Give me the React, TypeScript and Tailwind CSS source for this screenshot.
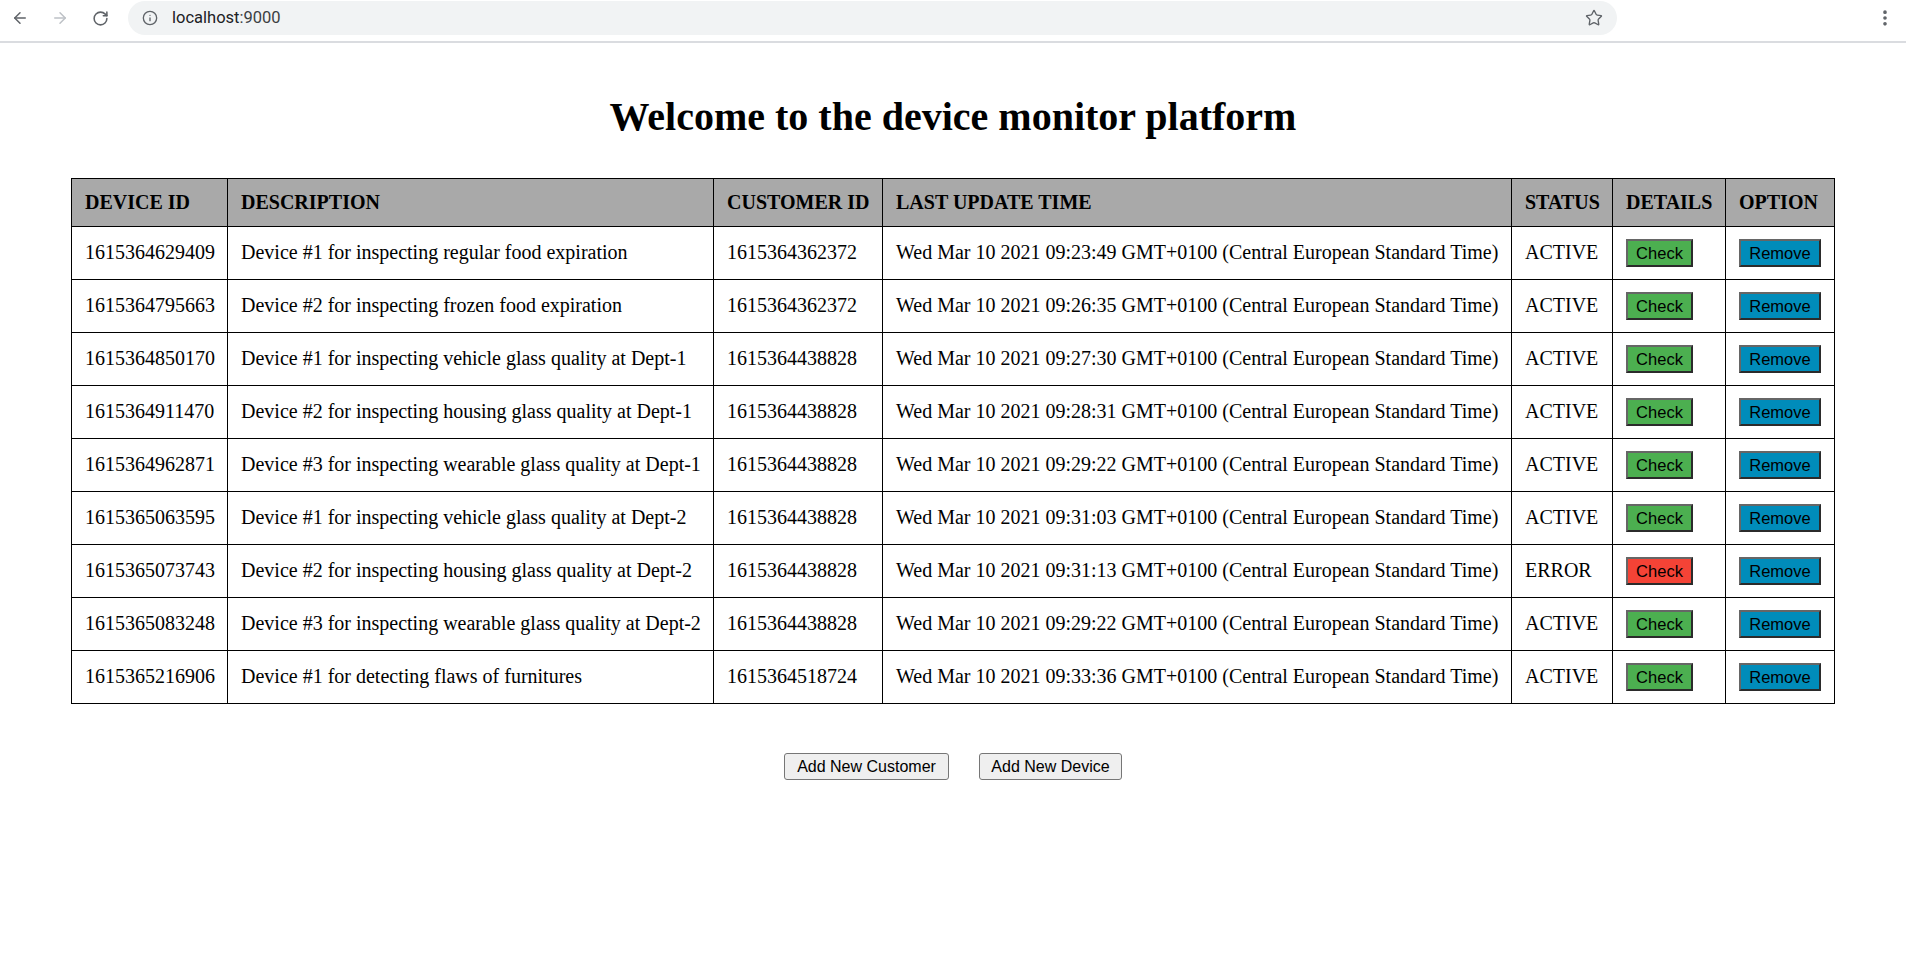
import { ArrowLeft, ArrowRight, RotateCw, Info, Star, EllipsisVertical } from "lucide-react";

type Device = {
  id: string;
  description: string;
  customerId: string;
  updated: string;
  status: "ACTIVE" | "ERROR";
};

const devices: Device[] = [
  { id: "1615364629409", description: "Device #1 for inspecting regular food expiration", customerId: "1615364362372", updated: "09:23:49", status: "ACTIVE" },
  { id: "1615364795663", description: "Device #2 for inspecting frozen food expiration", customerId: "1615364362372", updated: "09:26:35", status: "ACTIVE" },
  { id: "1615364850170", description: "Device #1 for inspecting vehicle glass quality at Dept-1", customerId: "1615364438828", updated: "09:27:30", status: "ACTIVE" },
  { id: "1615364911470", description: "Device #2 for inspecting housing glass quality at Dept-1", customerId: "1615364438828", updated: "09:28:31", status: "ACTIVE" },
  { id: "1615364962871", description: "Device #3 for inspecting wearable glass quality at Dept-1", customerId: "1615364438828", updated: "09:29:22", status: "ACTIVE" },
  { id: "1615365063595", description: "Device #1 for inspecting vehicle glass quality at Dept-2", customerId: "1615364438828", updated: "09:31:03", status: "ACTIVE" },
  { id: "1615365073743", description: "Device #2 for inspecting housing glass quality at Dept-2", customerId: "1615364438828", updated: "09:31:13", status: "ERROR" },
  { id: "1615365083248", description: "Device #3 for inspecting wearable glass quality at Dept-2", customerId: "1615364438828", updated: "09:29:22", status: "ACTIVE" },
  { id: "1615365216906", description: "Device #1 for detecting flaws of furnitures", customerId: "1615364518724", updated: "09:33:36", status: "ACTIVE" },
];

const headers = ["DEVICE ID", "DESCRIPTION", "CUSTOMER ID", "LAST UPDATE TIME", "STATUS", "DETAILS", "OPTION"];
const widths = [156, 486, 169, 629, 101, 113, 109];

const btnBorder =
  "border-2 border-t-[#666] border-l-[#666] border-r-[#2b2b2b] border-b-[#2b2b2b] text-[16.5px] leading-none text-black font-['Liberation_Sans',Arial,sans-serif]";

const cell = "border border-black pl-[13px] pr-[10px] pb-[2px] whitespace-nowrap";

function BrowserBar() {
  return (
    <div className="h-[43px] border-b-2 border-[#dadce0] bg-white">
      <div className="flex items-center h-[36px]">
        <div className="w-[40px] flex justify-center">
          <ArrowLeft size={18} strokeWidth={2} className="text-[#5f6368]" />
        </div>
        <div className="w-[40px] flex justify-center">
          <ArrowRight size={18} strokeWidth={2} className="text-[#bdc1c6]" />
        </div>
        <div className="w-[40px] flex justify-center">
          <RotateCw size={17} strokeWidth={2.2} className="text-[#5f6368]" />
        </div>
        <div className="ml-[8px] w-[1489px] h-[34px] rounded-full bg-[#f1f3f4] flex items-center pl-[14px] pr-[14px]">
          <Info size={16} strokeWidth={2} className="text-[#5f6368]" />
          <span className="ml-[14px] text-[16.5px] font-['Roboto',sans-serif] text-[#202124]">
            localhost<span className="text-[#3c4043]">:9000</span>
          </span>
          <div className="flex-1" />
          <Star size={18} strokeWidth={1.8} className="text-[#5f6368]" />
        </div>
        <div className="flex-1" />
        <div className="w-[40px] flex justify-center mr-[1px]">
          <EllipsisVertical size={20} strokeWidth={2.4} className="text-[#5f6368]" />
        </div>
      </div>
    </div>
  );
}

export default function App() {
  return (
    <div className="min-h-screen bg-white text-black font-['Liberation_Serif','Times_New_Roman',serif]">
      <BrowserBar />
      <h1 className="mt-[51px] text-center text-[40px] leading-[46px] font-bold">
        Welcome to the device monitor platform
      </h1>
      <table className="mx-auto mt-[38px] w-[1763px] table-fixed border-collapse text-[20px]">
        <colgroup>
          {widths.map((w, i) => (
            <col key={i} style={{ width: w }} />
          ))}
        </colgroup>
        <thead>
          <tr className="h-[48px] bg-[#a9a9a9]">
            {headers.map((h) => (
              <th key={h} className={`${cell} text-left font-bold`}>
                {h}
              </th>
            ))}
          </tr>
        </thead>
        <tbody>
          {devices.map((d) => (
            <tr key={d.id} className="h-[53px]">
              <td className={cell}>{d.id}</td>
              <td className={cell}>{d.description}</td>
              <td className={cell}>{d.customerId}</td>
              <td className={cell}>
                Wed Mar 10 2021 {d.updated} GMT+0100 (Central European Standard Time)
              </td>
              <td className={cell}>{d.status}</td>
              <td className={cell}>
                <button
                  className={`${btnBorder} w-[67px] h-[28px] ${
                    d.status === "ERROR" ? "bg-[#f44336]" : "bg-[#4caf50]"
                  }`}
                >
                  Check
                </button>
              </td>
              <td className={cell}>
                <button className={`${btnBorder} w-[82px] h-[28px] bg-[#008cba]`}>Remove</button>
              </td>
            </tr>
          ))}
        </tbody>
      </table>
      <div className="mt-[49px] flex justify-center gap-[30px]">
        <button className="w-[165px] h-[27px] bg-[#efefef] border border-[#767676] rounded-[3px] text-[16px] leading-none text-black font-['Liberation_Sans',Arial,sans-serif]">
          Add New Customer
        </button>
        <button className="w-[143px] h-[27px] bg-[#efefef] border border-[#767676] rounded-[3px] text-[16px] leading-none text-black font-['Liberation_Sans',Arial,sans-serif]">
          Add New Device
        </button>
      </div>
    </div>
  );
}
